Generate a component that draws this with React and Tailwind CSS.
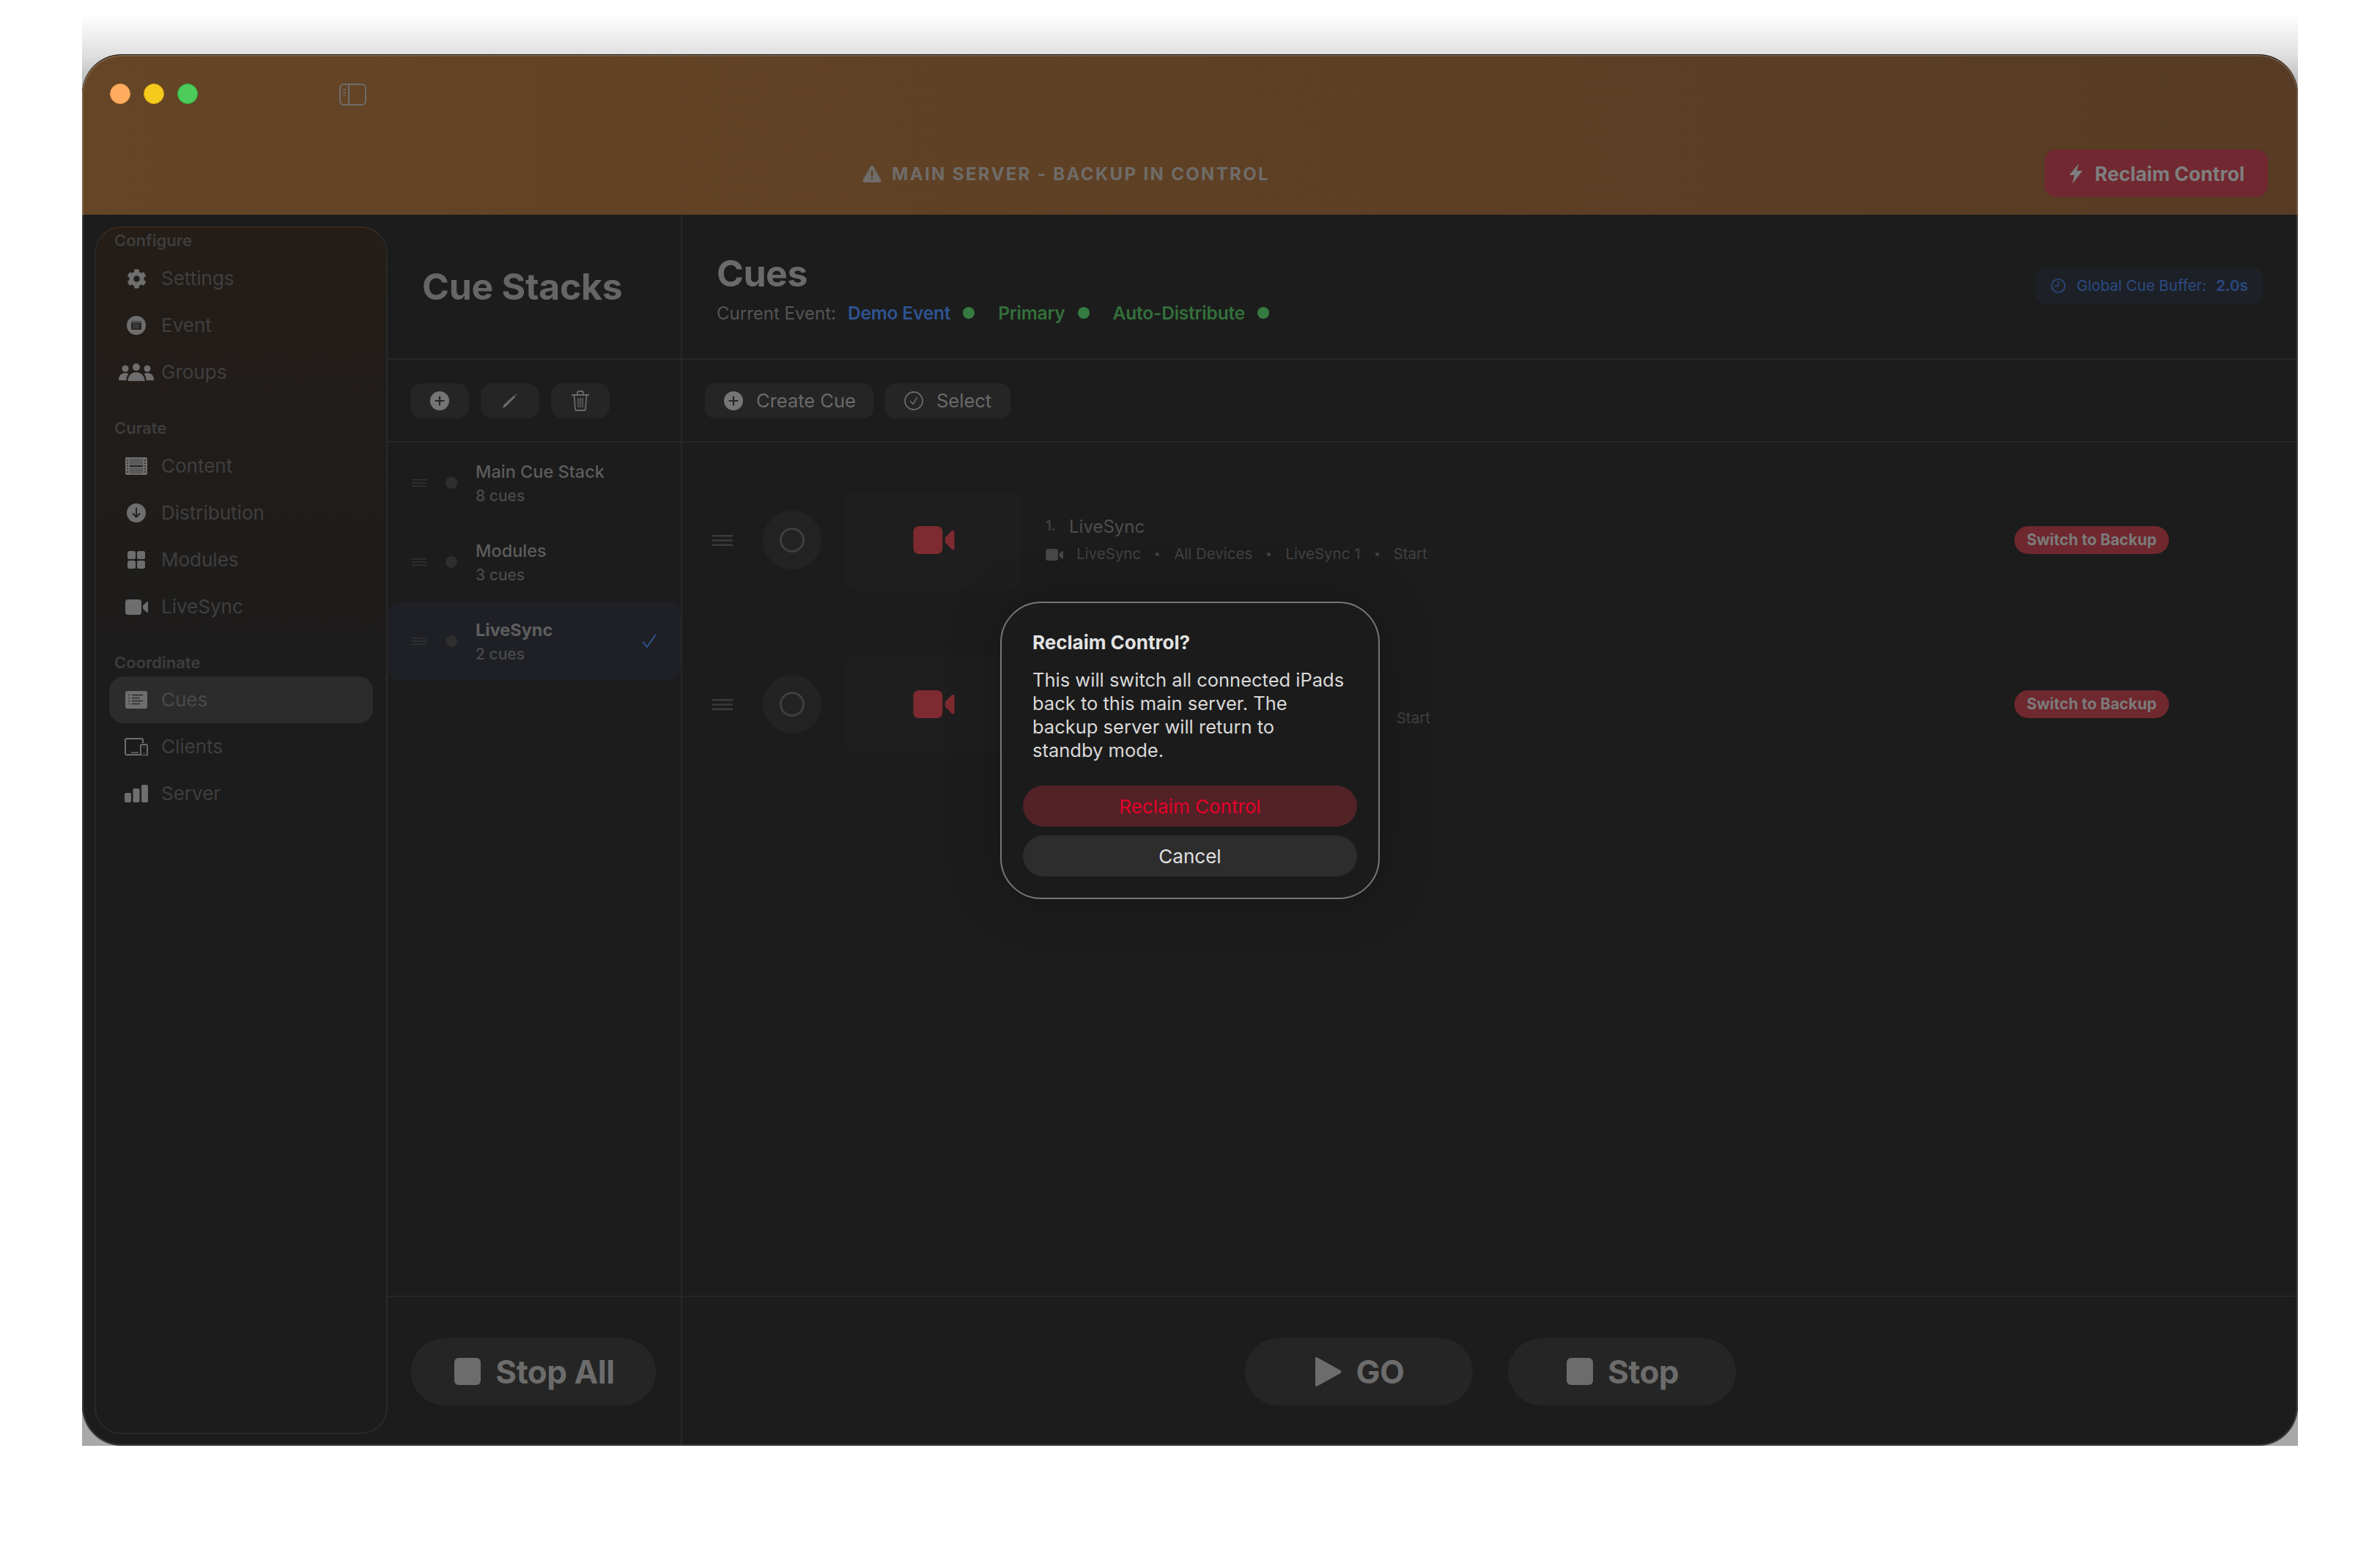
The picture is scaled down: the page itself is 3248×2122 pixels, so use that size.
import React from "react";
import { FaCog } from "react-icons/fa";

const G = "#6e6e6e";

const Ico = ({ w, h, children, className = "" }) => (
  <svg width={w} height={h} viewBox={`0 0 ${w} ${h}`} fill="none" className={`shrink-0 ${className}`}>{children}</svg>
);

const IconEvent = () => (
  <Ico w={26} h={26}>
    <circle cx="13" cy="13" r="13" fill={G} />
    <rect x="6" y="7" width="14" height="12" rx="1.5" fill="#2a2725" />
    <rect x="6" y="7" width="14" height="3" fill="#4a4a4a" />
    <path d="M9 12h8M9 14h8M9 16h8" stroke="#6e6e6e" strokeWidth="1" strokeDasharray="1 1" />
  </Ico>
);
const IconGroups = () => (
  <Ico w={48} h={24}>
    <circle cx="9" cy="7" r="4.5" fill={G} />
    <circle cx="24" cy="5" r="5" fill={G} />
    <circle cx="39" cy="7" r="4.5" fill={G} />
    <path d="M0 23c0-6 3-10 9-10 2 0 3.500.5 4.500 1.200C11 16 10.500 20 10.500 23z" fill={G} />
    <path d="M48 23c0-6-3-10-9-10-2 0-3.500.5-4.500 1.200 2.500 1.800 3 5.800 3 8.800z" fill={G} />
    <path d="M12.500 24c0-7 4.500-12 11.500-12s11.500 5 11.500 12z" fill={G} />
  </Ico>
);
const IconFilm = () => (
  <Ico w={30} h={24}>
    <rect width="30" height="24" rx="2" fill={G} />
    <rect x="6" y="2" width="18" height="8" fill="#5a5a5a" />
    <rect x="6" y="11" width="18" height="2" fill="#1f1f1f" />
    <rect x="6" y="14" width="18" height="8" fill="#5a5a5a" />
    <path d="M2 4h2M2 8h2M2 12h2M2 16h2M2 20h2M26 4h2M26 8h2M26 12h2M26 16h2M26 20h2" stroke="#2a2a2a" strokeWidth="1.500" />
  </Ico>
);
const IconDistribution = () => (
  <Ico w={26} h={26}>
    <circle cx="13" cy="13" r="13" fill={G} />
    <path d="M13 6.500v12M8.500 14l4.500 4.500 4.500-4.500" stroke="#1c1c1c" strokeWidth="1.800" strokeLinecap="round" strokeLinejoin="round" />
  </Ico>
);
const IconGrid = () => (
  <Ico w={24} h={24}>
    <rect x="0" y="0" width="11" height="11" rx="2.500" fill={G} />
    <rect x="13" y="0" width="11" height="11" rx="2.500" fill={G} />
    <rect x="0" y="13" width="11" height="11" rx="2.500" fill={G} />
    <rect x="13" y="13" width="11" height="11" rx="2.500" fill={G} />
  </Ico>
);
const IconCamera = ({ w = 31, h = 21, color = G }) => (
  <svg width={w} height={h} viewBox="0 0 31 21" className="shrink-0">
    <rect width="22" height="21" rx="4" fill={color} />
    <path d="M24 8.500 29 3.500c.7-.7 2-.3 2 .8v12.400c0 1.100-1.300 1.500-2 .8l-5-5z" fill={color} />
  </svg>
);
const IconList = () => (
  <Ico w={30} h={24}>
    <rect width="30" height="24" rx="3" fill={G} />
    <path d="M9 5.500h15M9 9.500h11M9 13.500h15M9 17.500h11" stroke="#2a2a2a" strokeWidth="1.500" />
    <path d="M4.500 5.500h1.500M4.500 9.500h1.500M4.500 13.500h1.500M4.500 17.500h1.500" stroke="#2a2a2a" strokeWidth="1.500" />
  </Ico>
);
const IconClients = () => (
  <Ico w={32} h={24}>
    <path d="M21 23H3a2 2 0 0 1-2-2V3a2 2 0 0 1 2-2h20a2 2 0 0 1 2 2v4" stroke={G} strokeWidth="2" />
    <path d="M9 20h10" stroke={G} strokeWidth="1.500" />
    <rect x="22" y="9" width="9" height="15" rx="2" fill="#1c1c1c" stroke={G} strokeWidth="1.800" />
    <path d="M25.500 12h2M25.500 21h2" stroke={G} strokeWidth="1.200" />
  </Ico>
);
const IconServer = () => (
  <Ico w={32} h={24}>
    <rect x="0" y="11" width="9" height="13" rx="2" fill={G} />
    <rect x="11.500" y="5" width="9" height="19" rx="2" fill={G} />
    <rect x="23" y="0" width="9" height="24" rx="2" fill={G} />
  </Ico>
);
const IconGear = () => <FaCog size={27} color={G} className="shrink-0" />;

const IconPlusCircle = ({ d = 26 }) => (
  <svg width={d} height={d} viewBox="0 0 26 26" className="shrink-0">
    <circle cx="13" cy="13" r="13" fill="#757575" />
    <path d="M13 7.500v11M7.500 13h11" stroke="#252525" strokeWidth="2.200" strokeLinecap="round" />
  </svg>
);
const IconPencil = () => (
  <Ico w={22} h={22}>
    <path d="M1 21 2.500 16.500 16.500 3.500 18.500 5.500 5 19z" fill="#6a6a6a" />
    <path d="M18.200 2.700 19.500 1.300 20.800 2.600 19.500 4z" fill="#6a6a6a" />
  </Ico>
);
const IconTrash = () => (
  <Ico w={24} h={28}>
    <path d="M1 6h22" stroke="#6a6a6a" strokeWidth="2" strokeLinecap="round" />
    <path d="M8 5V3a2 2 0 0 1 2-2h4a2 2 0 0 1 2 2v2" stroke="#6a6a6a" strokeWidth="1.800" />
    <path d="M3.500 6.500 5 25a2 2 0 0 0 2 2h10a2 2 0 0 0 2-2l1.500-18.500" stroke="#6a6a6a" strokeWidth="1.800" />
    <path d="M9 10v13M12 10v13M15 10v13" stroke="#6a6a6a" strokeWidth="1.300" />
  </Ico>
);
const IconCheckCircle = () => (
  <Ico w={26} h={26}>
    <circle cx="13" cy="13" r="12" stroke="#6a6a6a" strokeWidth="1.800" />
    <path d="M8.500 13.500 12 17.500 17.500 8.500" stroke="#6a6a6a" strokeWidth="1.500" strokeLinecap="round" strokeLinejoin="round" />
  </Ico>
);
const IconClock = () => (
  <Ico w={20} h={20}>
    <circle cx="10" cy="10" r="9" stroke="#2b4a82" strokeWidth="1.700" />
    <path d="M10 4v6.500H5.500" stroke="#2b4a82" strokeWidth="1.500" strokeLinecap="round" strokeLinejoin="round" />
  </Ico>
);
const IconWarn = () => (
  <Ico w={26} h={24}>
    <path d="M11 2a2.300 2.300 0 0 1 4 0l10.300 18.500A2.300 2.300 0 0 1 23.300 24H2.700a2.300 2.300 0 0 1-2-3.500z" fill="#6f6c69" />
    <path d="M13 8v7" stroke="#5f4125" strokeWidth="2.200" strokeLinecap="round" />
    <circle cx="13" cy="19" r="1.400" fill="#5f4125" />
  </Ico>
);
const IconBolt = () => (
  <Ico w={18} h={28}>
    <path d="M13 0 0 16h7L4 28 18 10h-8z" fill="#7f7f7f" />
  </Ico>
);
const IconStop = () => <div className="w-[36px] h-[37px] rounded-[6px] bg-[#6c6c6c] shrink-0" />;
const IconPlay = () => (
  <Ico w={36} h={40}>
    <path d="M0 2c0-1.600 1.500-2.400 2.800-1.600l31.500 17.600c1.300.8 1.300 3.200 0 4L2.800 39.600C1.500 40.400 0 39.600 0 38z" fill="#6c6c6c" />
  </Ico>
);
const Handle = ({ w, h, sw, color }) => (
  <Ico w={w} h={h}>
    <path d={`M0 ${sw / 2}H${w}M0 ${h / 2}H${w}M0 ${h - sw / 2}H${w}`} stroke={color} strokeWidth={sw} />
  </Ico>
);

const NavItem = ({ icon, label, active }) => (
  <div className={`h-[64px] rounded-[20px] flex items-center ${active ? "bg-[#2c2c2c]" : ""}`}>
    <div className="w-[71px] flex justify-center shrink-0 pl-[3px]">{icon}</div>
    <span className={`text-[26px] leading-none ${active ? "text-[#4a4a4a]" : "text-[#3f3f3f]"}`}>{label}</span>
  </div>
);

const NavLabel = ({ children, className = "mb-[6px]" }) => (
  <div className={`h-[28px] flex items-center pl-[7px] text-[22px] font-semibold text-[#3d3d3d] leading-none ${className}`}>{children}</div>
);

const StackRow = ({ title, sub, selected }) => (
  <div className={`h-[108px] flex items-center rounded-[18px] ${selected ? "bg-[#1e2026]" : ""}`}>
    <div className="w-[33px] shrink-0" />
    <Handle w={20} h={10} sw={1.5} color="#333333" />
    <div className="ml-[26px] w-[16px] h-[16px] rounded-full bg-[#2e2e2e] shrink-0" />
    <div className="ml-[25px] flex-1 flex flex-col gap-[5px]">
      <div className={`text-[23.500px] leading-[30px] ${selected ? "font-bold text-[#5e5e5e]" : "font-medium text-[#5c5c5c]"}`}>{title}</div>
      <div className="text-[21px] leading-[26px] font-medium text-[#4a4a4a]">{sub}</div>
    </div>
    {selected && (
      <Ico w={18} h={18} className="mr-[34px]">
        <path d="M1 10.500 6 17 17 1" stroke="#2f5390" strokeWidth="2" strokeLinecap="round" strokeLinejoin="round" />
      </Ico>
    )}
  </div>
);

const MetaDot = () => <span className="w-[5px] h-[5px] rounded-full bg-[#414141] mx-[20px] shrink-0" />;

const CueRow = ({ n, hidden }) => (
  <div className="h-[224px] flex items-center pl-[41px] pr-[176px]">
    <Handle w={28} h={15} sw={2.5} color="#3b3b3b" />
    <div className="ml-[41px] w-[80px] h-[80px] rounded-full bg-[#232323] flex items-center justify-center shrink-0">
      <div className="w-[34px] h-[34px] rounded-full border-[3px] border-[#3f3f3f]" />
    </div>
    <div className="ml-[33px] w-[240px] h-[135px] bg-[#1e1e1e] rounded-[12px] flex items-center justify-center shrink-0">
      <IconCamera w={57} h={38} color="#7d2a30" />
    </div>
    <div className="ml-[33px] flex-1 flex flex-col gap-[13px]">
      <div className={`flex items-center h-[26px] ${hidden ? "invisible" : ""}`}>
        <span className="text-[19px] font-medium text-[#454545] w-[32px]">{n}.</span>
        <span className="text-[24px] text-[#4e4e4e]">LiveSync</span>
      </div>
      <div className="flex items-center h-[24px] text-[20.500px] text-[#414141]">
        <span className={`flex items-center ${hidden ? "invisible" : ""}`}>
          <IconCamera w={24} h={16} color="#484848" />
          <span className="ml-[18px]">LiveSync</span>
          <MetaDot />
          <span>All Devices</span>
          <MetaDot />
          <span>LiveSync {n}</span>
          <MetaDot />
        </span>
        <span>Start</span>
      </div>
    </div>
    <button className="w-[211px] h-[38px] rounded-full bg-[#6e282e] text-[#7b7b7b] text-[21px] font-bold flex items-center justify-center shrink-0">
      Switch to Backup
    </button>
  </div>
);

const Pill = ({ w, icon, label }) => (
  <button className={`${w} h-[92px] rounded-full bg-[#252525] pl-[3px] flex items-center justify-center gap-[20px] text-[44px] font-bold text-[#6c6c6c] leading-none tracking-[-0.5px]`}>
    {icon}
    <span>{label}</span>
  </button>
);

export default function App() {
  return (
    <div className="w-[3248px] h-[2122px] bg-white pl-[112px] font-['Inter','Noto_Sans',sans-serif] overflow-hidden">
      <div className="w-[3024px] h-[1973px] pt-[75px] bg-[linear-gradient(to_bottom,#ffffff_20px,#e0e0e0_75px,#a8a8a8_130px,#a8a8a8_100%)]">
        <div className="relative w-full h-[1898px] rounded-[54px] overflow-hidden flex flex-col bg-[#1c1c1c] shadow-[0_-1px_0_#1a1a1a]">
          {/* Title bar */}
          <header className="h-[218px] shrink-0 bg-[linear-gradient(to_right,#654526,#573b24)] flex flex-col">
            <div className="h-[129px] flex items-start pt-[39px] pl-[38px]">
              <div className="flex gap-[18px]">
                <span className="w-[28px] h-[28px] rounded-full bg-[#ffac5e] border border-[#e89a4e]" />
                <span className="w-[28px] h-[28px] rounded-full bg-[#f4ca1e] border border-[#dfa90f]" />
                <span className="w-[28px] h-[28px] rounded-full bg-[#4dcb5b] border border-[#2fb53f]" />
              </div>
              <Ico w={37} h={30} className="ml-[193px]">
                <rect x="1" y="1" width="35" height="28" rx="5" stroke="#6f6c69" strokeWidth="2" />
                <path d="M13 1v28" stroke="#6f6c69" strokeWidth="2" />
                <path d="M5 8h4M5 12h4M5 16h4" stroke="#6f6c69" strokeWidth="1.500" />
              </Ico>
            </div>
            <div className="h-[65px] flex items-center pr-[41px]">
              <div className="flex-1 flex items-center justify-center gap-[14px] pl-[8px]">
                <IconWarn />
                <span className="text-[24px] font-bold tracking-[2.350px] text-[#6f6c69] leading-none pt-[2px]">MAIN SERVER - BACKUP IN CONTROL</span>
              </div>
              <button className="w-[305px] h-[65px] rounded-[16px] bg-[#712830] pl-[2px] flex items-center justify-center gap-[17px] text-[26.500px] font-bold text-[#7f7f7f]">
                <IconBolt />
                <span className="pt-[2px]">Reclaim Control</span>
              </button>
            </div>
          </header>

          <div className="flex flex-1 min-h-0">
            {/* Sidebar */}
            <aside className="w-[417px] shrink-0 pl-[17px] py-[16px]">
              <div className="h-full rounded-[36px] border-2 border-[#292929] border-t-[#3a2a1c] bg-[linear-gradient(to_bottom,#241d18,#1c1c1c_40%)] px-[18px] pt-[3px]">
                <NavLabel>Configure</NavLabel>
                <NavItem icon={<IconGear />} label="Settings" />
                <NavItem icon={<IconEvent />} label="Event" />
                <NavItem icon={<IconGroups />} label="Groups" />
                <div className="mt-[30px]">
                  <NavLabel>Curate</NavLabel>
                  <NavItem icon={<IconFilm />} label="Content" />
                  <NavItem icon={<IconDistribution />} label="Distribution" />
                  <NavItem icon={<IconGrid />} label="Modules" />
                  <NavItem icon={<IconCamera />} label="LiveSync" />
                </div>
                <div className="mt-[30px]">
                  <NavLabel className="mb-[5px]">Coordinate</NavLabel>
                  <NavItem icon={<IconList />} label="Cues" active />
                  <NavItem icon={<IconClients />} label="Clients" />
                  <NavItem icon={<IconServer />} label="Server" />
                </div>
              </div>
            </aside>

            {/* Cue Stacks column */}
            <section className="w-[402px] shrink-0 border-r-2 border-[#282828] flex flex-col">
              <div className="h-[198px] shrink-0 border-b-2 border-[#262626] flex items-center pl-[47px]">
                <h1 className="text-[50px] font-bold text-[#666666] leading-none tracking-[-0.3px]">Cue Stacks</h1>
              </div>
              <div className="h-[113px] shrink-0 border-b-2 border-[#262626] flex items-center gap-[16px] pl-[31px] pt-[1px]">
                <button className="w-[80px] h-[48px] rounded-[16px] bg-[#252525] flex items-center justify-center"><IconPlusCircle /></button>
                <button className="w-[80px] h-[48px] rounded-[16px] bg-[#252525] flex items-center justify-center"><IconPencil /></button>
                <button className="w-[80px] h-[48px] rounded-[16px] bg-[#252525] flex items-center justify-center"><IconTrash /></button>
              </div>
              <div className="flex-1 pt-[1px]">
                <StackRow title="Main Cue Stack" sub="8 cues" />
                <StackRow title="Modules" sub="3 cues" />
                <StackRow title="LiveSync" sub="2 cues" selected />
              </div>
              <div className="h-[205px] shrink-0 border-t-2 border-[#262626] flex items-center pl-[32px]">
                <Pill w="w-[334px]" icon={<IconStop />} label="Stop All" />
              </div>
            </section>

            {/* Cues column */}
            <main className="flex-1 min-w-0 flex flex-col">
              <div className="h-[198px] shrink-0 border-b-2 border-[#262626] flex items-center justify-between pl-[47px] pr-[48px]">
                <div className="flex flex-col gap-[18px] mt-[4px]">
                  <h2 className="text-[50px] font-bold text-[#6a6a6a] leading-none tracking-[-0.5px]">Cues</h2>
                  <div className="flex items-center text-[24.500px] leading-[23px] font-semibold">
                    <span className="font-normal text-[24px] text-[#555555]">Current Event:</span>
                    <span className="ml-[16px] text-[#2f5390] tracking-[-0.2px]">Demo Event</span>
                    <span className="ml-[17px] w-[16px] h-[16px] rounded-full bg-[#357a40]" />
                    <span className="ml-[32px] text-[#33703b] tracking-[-0.2px]">Primary</span>
                    <span className="ml-[17px] w-[16px] h-[16px] rounded-full bg-[#357a40]" />
                    <span className="ml-[32px] text-[#33703b] tracking-[-0.2px]">Auto-Distribute</span>
                    <span className="ml-[17px] w-[16px] h-[16px] rounded-full bg-[#357a40]" />
                  </div>
                </div>
                <div className="w-[310px] h-[50px] rounded-[14px] bg-[#1d2127] flex items-center pl-[21px] text-[20.500px] text-[#2b4a82] -mt-[2px]">
                  <IconClock />
                  <span className="ml-[15px]">Global Cue Buffer:</span>
                  <span className="ml-[13px] font-semibold">2.0s</span>
                </div>
              </div>
              <div className="h-[113px] shrink-0 border-b-2 border-[#262626] flex items-center gap-[16px] pl-[31px] pt-[1px]">
                <button className="w-[230px] h-[48px] rounded-[14px] bg-[#252525] flex items-center pl-[26px] gap-[18px] text-[25.500px] text-[#6a6a6a]">
                  <IconPlusCircle />
                  <span>Create Cue</span>
                </button>
                <button className="w-[171px] h-[48px] rounded-[14px] bg-[#252525] flex items-center pl-[26px] gap-[18px] text-[25.500px] text-[#6a6a6a]">
                  <IconCheckCircle />
                  <span>Select</span>
                </button>
              </div>
              <div className="flex-1 pt-[21px]">
                <CueRow n={1} />
                <CueRow n={2} hidden />
              </div>
              <div className="h-[205px] shrink-0 border-t-2 border-[#262626] flex items-center justify-center gap-[48px]">
                <Pill w="w-[311px]" icon={<IconPlay />} label="GO" />
                <Pill w="w-[311px]" icon={<IconStop />} label="Stop" />
              </div>
            </main>
          </div>

          {/* Window edge highlight */}
          <div className="absolute inset-0 rounded-[54px] pointer-events-none shadow-[inset_0_0_0_2px_rgba(255,255,255,0.14)]" />

          {/* Alert */}
          <div className="absolute inset-0 flex items-center justify-center">
            <div className="w-[518px] h-[406px] rounded-[56px] border-2 border-[#767676] bg-[#1b1b1b] shadow-[0_0_70px_rgba(0,0,0,0.25)] flex flex-col px-[29px] pt-[36px]">
              <div className="pl-[13px] text-[26px] leading-[36px] font-bold text-[#e3e3e3]">Reclaim Control?</div>
              <p className="pl-[13px] mt-[17px] w-[441px] text-[25.500px] leading-[32px] text-[#d9d9d9]">
                This will switch all connected iPads back to this main server. The backup server will return to standby mode.
              </p>
              <button className="mt-[32px] h-[56px] rounded-full bg-[#522226] text-[#e4002b] text-[26px] flex items-center justify-center">Reclaim Control</button>
              <button className="mt-[12px] h-[56px] rounded-full bg-[#2d2d2d] text-[#e0e0e0] text-[26px] flex items-center justify-center">Cancel</button>
            </div>
          </div>
        </div>
      </div>
    </div>
  );
}
